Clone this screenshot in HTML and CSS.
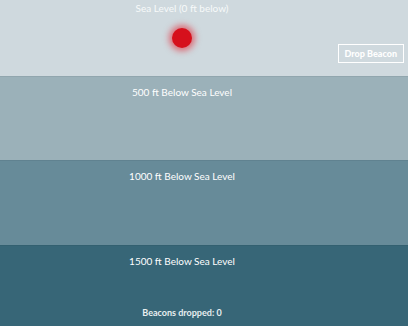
FILE: index.html
```html
<!DOCTYPE html>
<html lang="en">
<head>
  <meta charset="UTF-8">
  <meta name="viewport" content="width=device-width, initial-scale=1.0">
  <title>Depth Beacons</title>
  <link rel="stylesheet" href="styles.css">
</head>
<body>
  <div class="ocean">
    <section class="zone zone-surface">
      <div class="zone-label">Sea Level (0 ft below)</div>
      <div class="surface-row">
        <div class="beacon"></div>
        <button class="drop-btn" onclick="dropBeacon()">Drop Beacon</button>
      </div>
    </section>

    <section class="zone zone-500">
      <div class="zone-label">500 ft Below Sea Level</div>
    </section>

    <section class="zone zone-1000">
      <div class="zone-label">1000 ft Below Sea Level</div>
    </section>

    <section class="zone zone-1500">
      <div class="zone-label">1500 ft Below Sea Level</div>
      <div class="counter">Beacons dropped: <span id="count">0</span></div>
    </section>
  </div>

  <script>
    let dropped = 0;

    function dropBeacon() {
      dropped++;
      document.getElementById('count').innerText = dropped;
    }
  </script>
</body>
</html>
```

FILE: styles.css
```css
body {
  margin: 0;
  padding: 0;
  font-family: Lato, 'Open Sans', sans-serif;
  color: #fff;
  overflow: hidden;
}

.zone {
  box-sizing: border-box;
  padding: 8px 44px 0 0;
  text-align: center;
  border-top: 1px solid rgba(0, 0, 0, 0.06);
}

.zone-label {
  font-size: 10px;
  line-height: 14px;
}

.zone-surface {
  height: 76px;
  padding-top: 1px;
  background: #cfd9de;
  border-top: none;
  color: #f7f9fa;
}

.zone-500 {
  height: 84px;
  background: #9bb1b9;
}

.zone-1000 {
  height: 85px;
  background: #678b99;
}

.zone-1500 {
  height: 81px;
  background: #376677;
}

.surface-row {
  display: grid;
  grid-template-columns: 172px 20px 1fr;
  margin-top: 13px;
  margin-right: -40px;
}

.beacon {
  grid-column: 2;
  width: 20px;
  height: 20px;
  border-radius: 50%;
  background: #d6101c;
  box-shadow: 0 0 6px 3px rgba(230, 20, 35, 0.55);
}

.drop-btn {
  grid-column: 3;
  justify-self: end;
  margin-top: 16px;
  height: 19px;
  padding: 0 6px;
  background: transparent;
  border: 1.5px solid #fff;
  color: #fff;
  font-family: Lato, 'Open Sans', sans-serif;
  font-size: 9px;
  font-weight: 900;
  cursor: pointer;
}

.counter {
  margin-top: 38px;
  font-size: 9px;
  line-height: 13px;
  font-weight: bold;
  color: #e8eef0;
}
```
